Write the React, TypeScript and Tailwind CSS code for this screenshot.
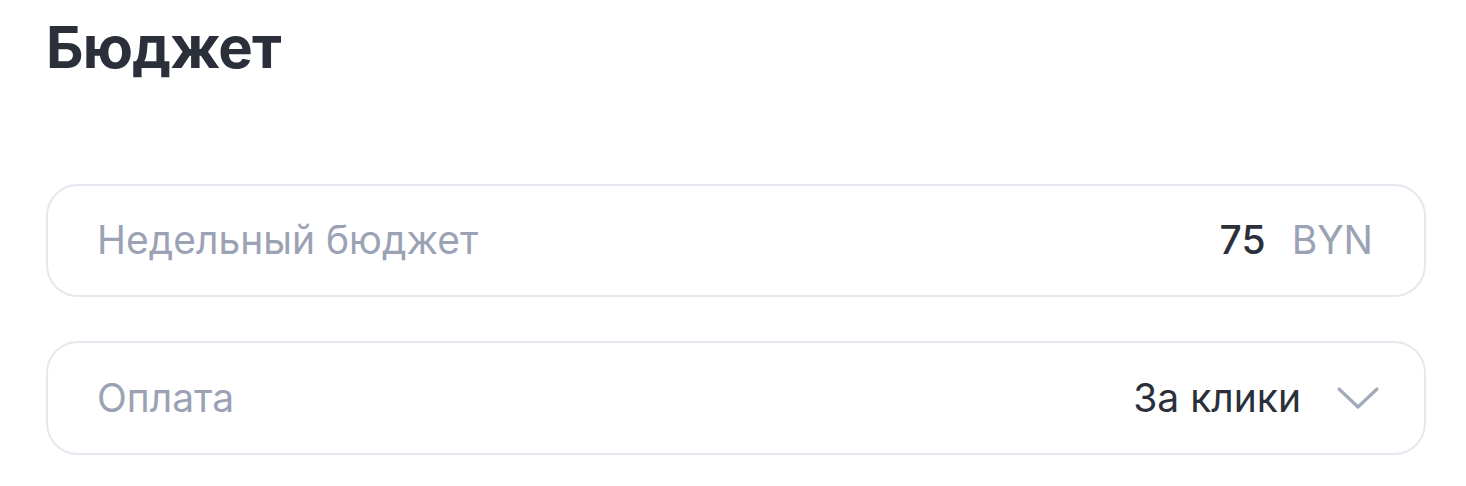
export default function App() {
  return (
    <div className="w-[1466px] h-[486px] bg-white px-[46px] pt-[18px] font-['Inter',sans-serif]">
      <h2 className="text-[58px] leading-none font-bold text-[#2b2f3a] tracking-[-0.8px]">Бюджет</h2>

      <div className="mt-[108px] flex flex-col gap-[44px] w-[1380px]">
        {/* Недельный бюджет */}
        <div className="h-[113px] rounded-[32px] border-2 border-[#e6e8f0] flex items-center justify-between pl-[49px] pr-[51px]">
          <span className="text-[39px] text-[#9aa2b4]">Недельный бюджет</span>
          <div className="flex items-center gap-[26px] text-[39px]">
            <span className="text-[#2b2f3a] font-medium">75</span>
            <span className="text-[#9aa2b4]">BYN</span>
          </div>
        </div>

        {/* Оплата */}
        <div className="h-[114px] rounded-[32px] border-2 border-[#e6e8f0] flex items-center justify-between pl-[49px] pr-[44px]">
          <span className="text-[39px] text-[#9aa2b4]">Оплата</span>
          <div className="flex items-center gap-[35px]">
            <span className="text-[39px] text-[#2b2f3a]">За клики</span>
            <svg width="44" height="26" viewBox="0 0 44 26" fill="none">
              <path d="M3 4 L22 22 L41 4" stroke="#a3abbb" strokeWidth="3.2" strokeLinecap="round" strokeLinejoin="round" />
            </svg>
          </div>
        </div>
      </div>
    </div>
  )
}
